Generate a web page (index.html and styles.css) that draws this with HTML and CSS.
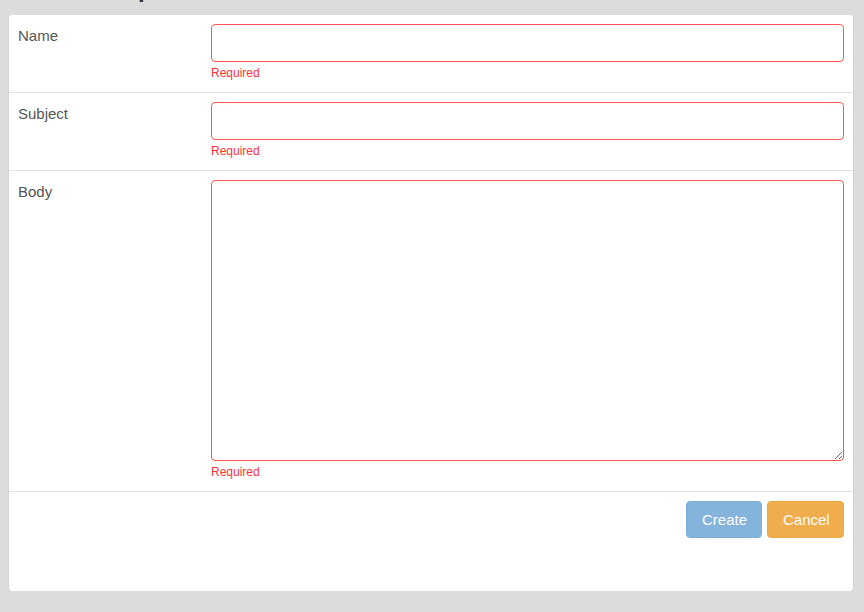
FILE: index.html
```html
<!DOCTYPE html>
<html lang="en">
<head>
    <meta charset="UTF-8">
    <meta name="viewport" content="width=device-width, initial-scale=1.0">
    <title>Create Template</title>
    <link rel="stylesheet" href="styles.css">
</head>
<body>
    <div class="page">
        <h1 class="page-title">Create Template</h1>

        <form class="card">
            <div class="form-row">
                <label class="form-label" for="name">Name</label>
                <div class="form-field">
                    <input type="text" id="name" class="form-control invalid">
                    <div class="error">Required</div>
                </div>
            </div>

            <div class="form-row">
                <label class="form-label" for="subject">Subject</label>
                <div class="form-field">
                    <input type="text" id="subject" class="form-control invalid">
                    <div class="error">Required</div>
                </div>
            </div>

            <div class="form-row">
                <label class="form-label" for="body">Body</label>
                <div class="form-field">
                    <textarea id="body" class="form-control textarea invalid"></textarea>
                    <div class="error">Required</div>
                </div>
            </div>

            <div class="form-actions">
                <button type="button" class="btn btn-primary" disabled>Create</button>
                <button type="button" class="btn btn-warning">Cancel</button>
            </div>
        </form>
    </div>
</body>
</html>
```

FILE: styles.css
```css
* {
    margin: 0;
    padding: 0;
    box-sizing: border-box;
    font-family: 'Liberation Sans', Arial, sans-serif;
}

body {
    background: #dcdcdc;
    overflow: hidden;
}

.page {
    padding: 0 11px 0 9px;
}

.page-title {
    font-size: 24px;
    font-weight: bold;
    line-height: 26px;
    color: #333;
    margin-top: -24px;
    height: 39px;
}

.card {
    background: white;
    border-radius: 3px;
    box-shadow: 0 1px 2px rgba(0,0,0,0.12);
    height: 576px;
}

.form-row {
    display: flex;
    padding: 9px 9px 10px 9px;
    border-bottom: 1px solid #e3e3e3;
}

.form-label {
    width: 193px;
    flex-shrink: 0;
    padding-top: 2px;
    font-size: 15px;
    line-height: 20px;
    color: #555;
}

.form-field {
    flex: 1;
}

.form-control {
    display: block;
    width: 100%;
    height: 38px;
    padding: 6px 12px;
    border: 1px solid #ccc;
    border-radius: 4px;
    font-size: 14px;
    color: #555;
    background: white;
    outline: none;
}

.form-control.invalid {
    border-color: #f55;
}

.textarea {
    height: 281px;
    resize: vertical;
    border-bottom-color: #f00;
}

.error {
    margin-top: 3px;
    font-size: 12px;
    line-height: 17px;
    color: #f33;
}

.form-actions {
    display: flex;
    justify-content: flex-end;
    gap: 5px;
    padding: 9px 9px;
}

.btn {
    height: 37px;
    padding: 0 15px;
    border: 1px solid transparent;
    border-radius: 4px;
    font-size: 15px;
    color: white;
    cursor: pointer;
}

.btn-primary {
    background: #84b3dc;
    border-color: #7eadd6;
    width: 76px;
}

.btn-primary:disabled {
    cursor: not-allowed;
}

.btn-warning {
    background: #f0ad4e;
    border-color: #eea743;
    width: 77px;
}
```
